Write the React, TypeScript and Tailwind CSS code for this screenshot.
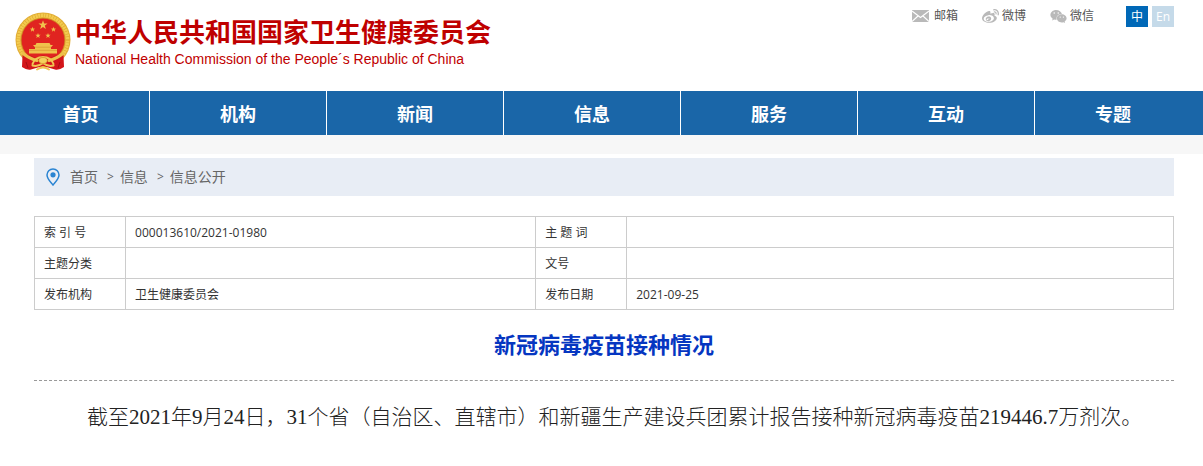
import React from "react";
import { FaWeibo, FaWeixin } from "react-icons/fa";

const navItems = ["首页", "机构", "新闻", "信息", "服务", "互动", "专题"];

const rows = [
  ["索 引 号", "000013610/2021-01980", "主 题 词", ""],
  ["主题分类", "", "文号", ""],
  ["发布机构", "卫生健康委员会", "发布日期", "2021-09-25"],
];

function starPoints(cx: number, cy: number, r: number) {
  return Array.from({ length: 10 }, (_, i) => {
    const a = (Math.PI / 5) * i - Math.PI / 2;
    const d = i % 2 ? r * 0.4 : r;
    return `${(cx + d * Math.cos(a)).toFixed(2)},${(cy + d * Math.sin(a)).toFixed(2)}`;
  }).join(" ");
}

function Emblem() {
  return (
    <svg viewBox="0 0 56 60" className="h-[60px] w-14 shrink-0" aria-hidden="true">
      <circle cx="28" cy="28" r="27.5" fill="#e2ae36" />
      <circle cx="28" cy="28" r="24.6" fill="none" stroke="#f3cb4e" strokeWidth="3.6" />
      <circle cx="28" cy="28" r="24.8" fill="none" stroke="#d9a02c" strokeWidth="3.6" strokeDasharray="0.5 2.2" />
      <circle cx="28" cy="28" r="21.8" fill="#e02420" stroke="#c98a1e" strokeWidth="0.6" />
      <g fill="#f0c24c">
        <polygon points={starPoints(28, 13, 4.8)} />
        <polygon points={starPoints(17.5, 17.5, 2.8)} />
        <polygon points={starPoints(38.5, 17.5, 2.8)} />
        <polygon points={starPoints(23, 23.7, 2.8)} />
        <polygon points={starPoints(33, 23.7, 2.8)} />
        <path d="M21.500 31h13l1 2h2.500l-2 2.200V37h6v4.500H14V37h6v-1.800L18 33h2.500z" />
      </g>
      <path d="M20 35.200h16M14 38.300h28" stroke="#d5902a" strokeWidth="0.6" />
      <path d="M7.500 43 Q15 42 21 46 L28 43 L35 46 Q41 42 48.500 43 L49 55 Q44 58.500 40 57.500 L28 54 L16 57.500 Q12 58.500 7 55Z" fill="#d3151a" />
      <g fill="none" stroke="#ecc04a" strokeWidth="3.2" strokeLinecap="round">
        <path d="M8 41.500 Q15 47 22 48.500" />
        <path d="M48 41.500 Q41 47 34 48.500" />
      </g>
      <g fill="none" stroke="#f0c653" strokeWidth="2" strokeLinecap="round">
        <path d="M17.500 52 Q20 45 28 45 Q36 45 38.500 52" />
        <path d="M17.500 53.500 Q23 55 28 51 Q33 55 38.500 53.500" />
        <path d="M22 57.500 Q28 53.500 34 57.500" />
      </g>
      <ellipse cx="28" cy="48.500" rx="4.200" ry="3" fill="#f4d05c" stroke="#cf8422" strokeWidth="0.6" />
      <path d="M11 50l2 6M45 50l-2 6" stroke="#a90e14" strokeWidth="1" />
    </svg>
  );
}

function MailIcon() {
  return (
    <svg viewBox="0 0 17 12" className="h-3 w-[17px]" aria-hidden="true">
      <rect width="17" height="12" fill="#b9b9b9" />
      <path d="M0 1l8.500 6.500L17 1M0 11.500l6-5.500M17 11.500l-6-5.500" fill="none" stroke="#fff" strokeWidth="1.100" />
    </svg>
  );
}

function PinIcon() {
  return (
    <svg viewBox="0 0 14 18" className="h-[18px] w-3.5" aria-hidden="true">
      <path d="M7 1C3.600 1 1 3.600 1 7c0 3.700 3.800 7.300 6 10 2.200-2.700 6-6.300 6-10 0-3.400-2.600-6-6-6z" fill="none" stroke="#2a84d2" strokeWidth="1.500" />
      <circle cx="7" cy="6.800" r="2.600" fill="#2a84d2" />
    </svg>
  );
}

export default function App() {
  return (
    <div className="bg-white font-['Open_Sans','Noto_Sans_CJK_SC',sans-serif] text-[#333]">
      <header className="flex h-[91px] items-start justify-between pr-[29px] pl-[15px]">
        <a href="#" className="flex pt-3 text-[#bf0000]">
          <Emblem />
          <div className="pt-[3px] pl-1">
            <h1 className="font-['Noto_Sans_CJK_SC',sans-serif] text-[26px] leading-8 font-bold whitespace-nowrap">
              中华人民共和国国家卫生健康委员会
            </h1>
            <p className="font-['Liberation_Sans',sans-serif] text-sm leading-6 whitespace-nowrap">
              National Health Commission of the People´s Republic of China
            </p>
          </div>
        </a>
        <div className="flex items-center pt-[5px] text-xs leading-[22px] text-[#555]">
          <a href="#" className="mr-6 flex items-center gap-[5px]">
            <MailIcon />
            邮箱
          </a>
          <a href="#" className="mr-6 flex items-center gap-[3px]">
            <FaWeibo className="size-[17px] text-[#b9b9b9]" />
            微博
          </a>
          <a href="#" className="mr-8 flex items-center gap-[3px]">
            <FaWeixin className="size-[17px] text-[#b9b9b9]" />
            微信
          </a>
          <a href="#" className="mr-1 h-[21px] w-[22px] bg-[#0068b7] text-center text-white">中</a>
          <a href="#" className="h-[21px] w-[22px] bg-[#c5dae9] text-center text-white">En</a>
        </div>
      </header>

      <nav className="grid grid-cols-[138fr_repeat(5,177fr)_156fr] bg-[#1a66a8] px-3">
        {navItems.map((item, i) => (
          <a
            key={item}
            href="#"
            className={
              "block h-11 text-center text-lg leading-[46px] font-bold text-white" +
              (i < navItems.length - 1 ? " border-r border-white" : "")
            }
          >
            {item}
          </a>
        ))}
      </nav>
      <div className="h-[19px] bg-[#f7f7f7]" />

      <main className="pt-1 pr-[29px] pl-[34px]">
        <div className="flex h-[38px] items-center bg-[#e8edf5] pl-3 text-sm text-[#666]">
          <PinIcon />
          <a href="#" className="ml-2.5">首页</a>
          <span className="mr-1.5 ml-[9px] text-xs">&gt;</span>
          <a href="#">信息</a>
          <span className="mr-1.5 ml-[9px] text-xs">&gt;</span>
          <a href="#">信息公开</a>
        </div>

        <table className="mt-5 w-full table-fixed border-collapse text-xs">
          <colgroup>
            <col className="w-[8%]" />
            <col className="w-[36%]" />
            <col className="w-[8%]" />
            <col className="w-[48%]" />
          </colgroup>
          <tbody>
            {rows.map((row) => (
              <tr key={row[0]} className="h-[31px]">
                {row.map((cell, i) =>
                  i % 2 === 0 ? (
                    <th key={i} scope="row" className="border border-[#ccc] px-[9px] pt-0.5 text-left font-normal">
                      {cell}
                    </th>
                  ) : (
                    <td key={i} className="border border-[#ccc] px-[9px] pt-0.5">
                      {cell}
                    </td>
                  ),
                )}
              </tr>
            ))}
          </tbody>
        </table>

        <h2 className="border-b border-dashed border-[#999] pt-[18px] pb-5 text-center text-[22px] leading-8 font-bold text-[#0536c1]">
          新冠病毒疫苗接种情况
        </h2>

        <p className="pt-5 pl-[53px] font-['Liberation_Serif','Noto_Sans_CJK_SC',serif] text-[21px] leading-8 font-light whitespace-nowrap text-[#222]">
          截至2021年9月24日，31个省（自治区、直辖市）和新疆生产建设兵团累计报告接种新冠病毒疫苗219446.7万剂次。
        </p>
      </main>
    </div>
  );
}
